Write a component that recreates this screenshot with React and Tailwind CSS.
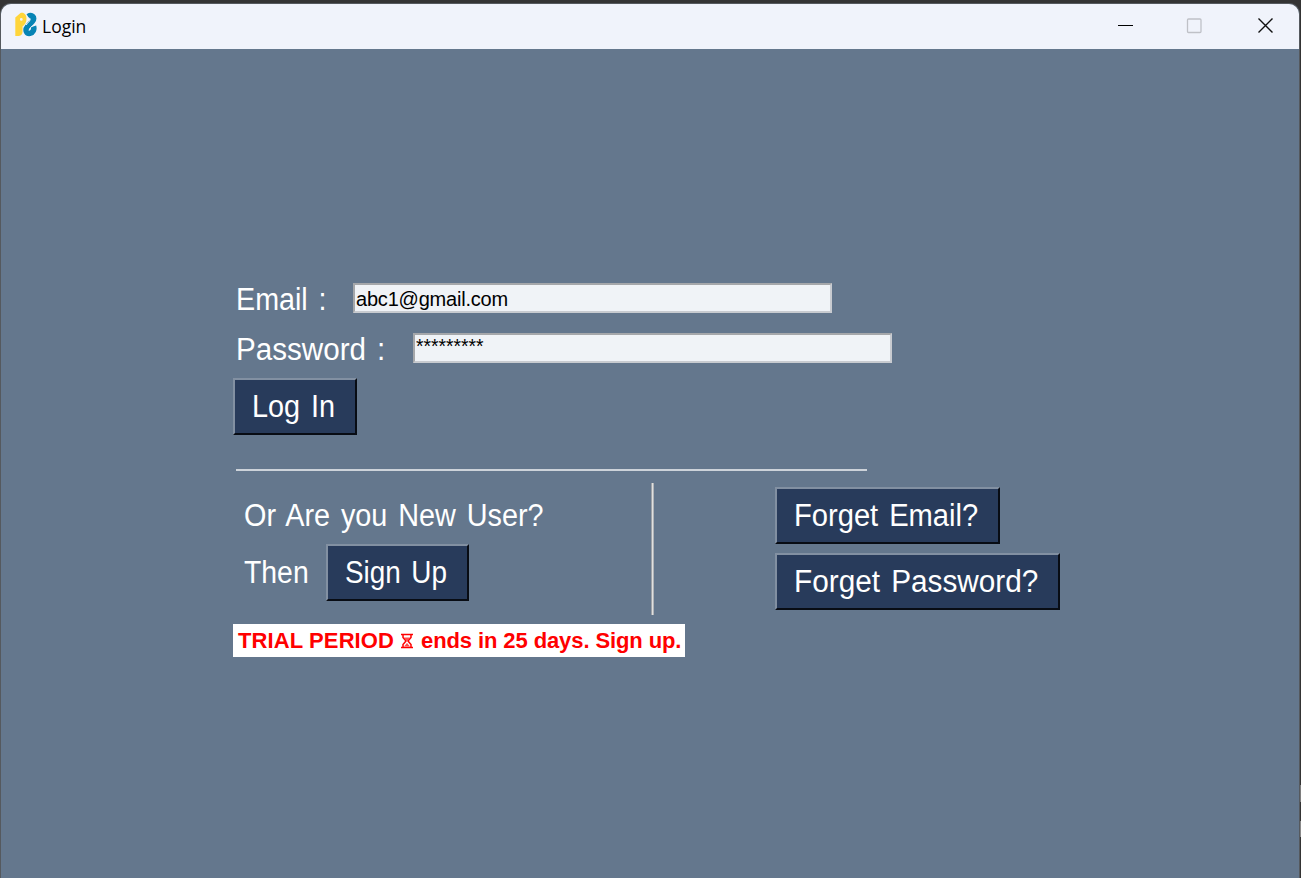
const LABEL = "block whitespace-nowrap text-[31px] leading-[34px] text-white";

function Text({ children, className }) {
  return <span className={"inline-block origin-left whitespace-nowrap [word-spacing:3px] " + className}>{children}</span>;
}

function Button({ children, className }) {
  return (
    <button
      className={
        "flex h-[57px] shrink-0 items-center border-2 border-t-[#8290a2] border-l-[#8290a2] border-r-[#080c14] border-b-[#080c14] bg-[#283b5b] pl-[17px] text-[31px] leading-[34px] text-white " +
        className
      }
    >
      {children}
    </button>
  );
}

function Field({ value, className }) {
  return (
    <input
      readOnly
      value={value}
      className={
        "block h-[30px] w-[479px] border-2 border-t-[#a5a7aa] border-l-[#a5a7aa] border-r-[#c8cbd0] border-b-[#c8cbd0] bg-[#f0f3f7] pl-px text-black outline-none " +
        className
      }
    />
  );
}

function AppIcon() {
  return (
    <svg width="22" height="26" viewBox="0 0 22 26" className="relative -top-px block">
      <path d="M13 4.500C17 2 20 5.500 17.600 9L12.500 14.800C9.500 18.500 12 21.800 15 21.300c3-.6 4.500-4 3.500-7" fill="none" stroke="#0784b5" strokeWidth="5.600" />
      <path d="M11.500 6.800c1.800-1.500 4-.8 3.500 1.200-.4 1.600-2.500 3-3.800 5M19.500 13c-3 1-5 3-5.500 5.500" fill="none" stroke="#f0f3fb" strokeWidth="1" />
      <path
        fillRule="evenodd"
        d="M.3 5.500 5.500 1C9-.2 11.500 3 11.500 6.500c0 4-1.500 6-4 8V20c0 2.500-2 4-4 4H.3zM6.300 6a1.400 1.400 0 1 0 0 2.800 1.400 1.400 0 0 0 0-2.800z"
        fill="#ffd53b"
      />
    </svg>
  );
}

function Hourglass() {
  return (
    <svg width="12" height="16" viewBox="0 0 12 16" className="mr-[8px] ml-[7px] inline-block align-[-1px]">
      <path d="M0 1.500h12M0 14.500h12M2 2v2.500L5 8l-3 3.500V14M10 2v2.500L7 8l3 3.500V14" fill="none" stroke="#f00" strokeWidth="1.500" />
      <path d="M3 4.500h6L6 8zM3 13.500 6 10l3 3.500z" fill="#f00" fillOpacity="0.7" />
    </svg>
  );
}

export default function App() {
  return (
    <div className="flex h-[878px] w-[1301px] overflow-hidden bg-[#343434] pt-[3px] font-['Liberation_Sans',sans-serif]">
      <div className="flex w-[1300px] flex-col overflow-hidden rounded-t-[11px] border border-b-0 border-[#55595e] bg-[#64778d]">
        <header className="flex h-[45px] shrink-0 items-center bg-[#f0f3fb] pb-[2px] pl-[14px]">
          <AppIcon />
          <span className="ml-[5px] font-['Open_Sans','Noto_Sans',sans-serif] text-[17.500px] leading-6 text-black">Login</span>
          <svg width="156" height="16" viewBox="0 0 156 16" className="mr-[25px] ml-auto block">
            <path d="M0 7.500h15" stroke="#000" />
            <rect x="69.500" y="1" width="13.500" height="13.500" rx="1" fill="none" stroke="#bfc1c7" strokeWidth="1.300" />
            <path d="m140.500.5 14 14m0-14-14 14" stroke="#111" strokeWidth="1.400" />
          </svg>
        </header>
        <main className="flex grow flex-col items-start pt-[234px] pl-[232px]">
          <div className="flex pl-[3px]">
            <label className={LABEL + " w-[117px]"}>
              <Text className="scale-x-[0.925]">Email :</Text>
            </label>
            <Field value="abc1@gmail.com" className="pt-[2px] text-[20px] tracking-[-0.2px]" />
          </div>
          <div className="mt-4 flex pl-[3px]">
            <label className={LABEL + " w-[177px]"}>
              <Text className="scale-x-[0.955]">Password :</Text>
            </label>
            <Field value="*********" className="pb-[2px] text-[19.300px]" />
          </div>
          <Button className="mt-[11px] w-[124px]">
            <Text className="scale-x-[0.93]">Log In</Text>
          </Button>
          <div className="mt-[34px] ml-[3px] h-[2px] w-[631px] bg-[#cdd3da]" />
          <section className="mt-3 flex">
            <div className="w-[418px] pt-4 pl-[11px]">
              <p className={LABEL}>
                <Text className="scale-x-[0.93]">Or Are you New User?</Text>
              </p>
              <div className="mt-[11px] flex">
                <div className={LABEL + " w-[82px] pt-[12px]"}>
                  <Text className="scale-x-[0.915]">Then</Text>
                </div>
                <Button className="w-[143px]">
                  <Text className="scale-x-[0.9]">Sign Up</Text>
                </Button>
              </div>
            </div>
            <div className="h-[132px] w-[3px] border-x border-l-[#9ea2a7] border-r-[#b0b3b7] bg-[#e0e0df]" />
            <div className="ml-[121px] flex flex-col items-start gap-[9px] pt-1">
              <Button className="w-[225px]">
                <Text className="scale-x-[0.94]">Forget Email?</Text>
              </Button>
              <Button className="w-[285px]">
                <Text className="scale-x-[0.96]">Forget Password?</Text>
              </Button>
            </div>
          </section>
          <p className="mt-[9px] h-[33px] w-[452px] whitespace-nowrap bg-white pl-[5px] text-[22px] leading-[33px] font-bold text-[#f00]">
            <span className="tracking-[0.1px]">TRIAL PERIOD</span>
            <Hourglass />
            <span className="tracking-[-0.1px]">ends in 25 days. Sign up.</span>
          </p>
        </main>
      </div>
      <div className="flex w-px flex-col pt-[782px]">
        <div className="h-[17px] bg-[#7e7e7e]" />
        <div className="mt-[19px] h-[16px] bg-[#8a8a8a]" />
      </div>
    </div>
  );
}
